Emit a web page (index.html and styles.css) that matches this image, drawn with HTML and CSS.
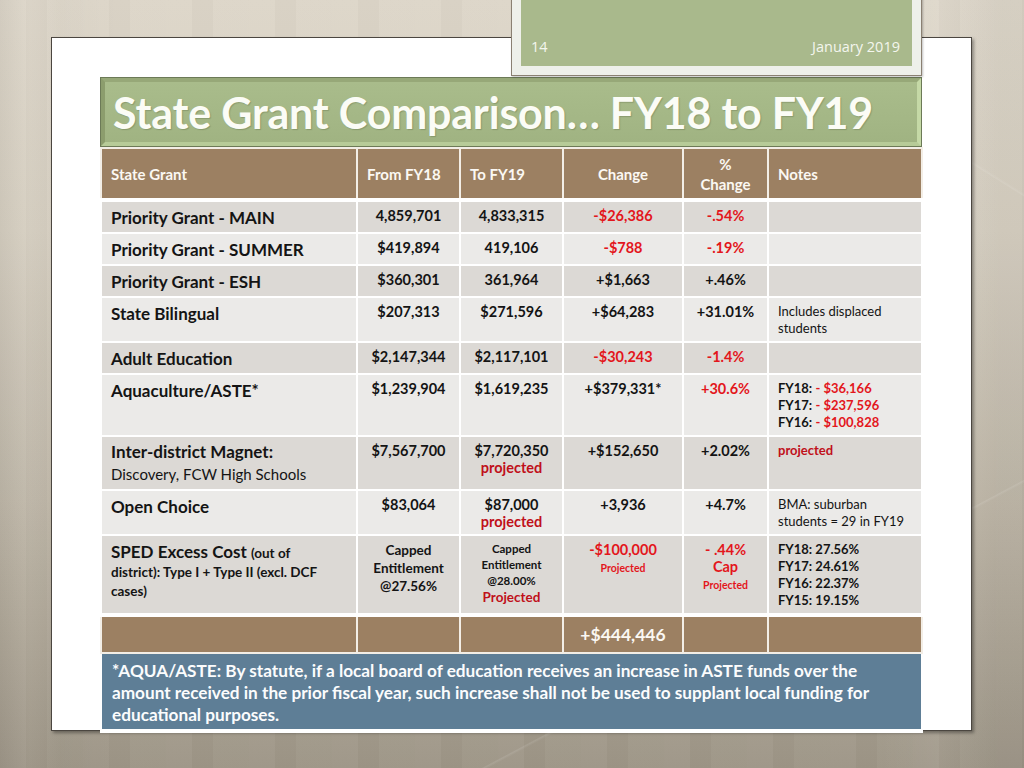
FILE: index.html
```html
<!DOCTYPE html>
<html lang="en">
<head>
<meta charset="utf-8">
<title>State Grant Comparison</title>
<link rel="stylesheet" href="styles.css">
</head>
<body>
<div class="datebox">
  <div class="datebox-inner">
    <span class="slide-num">14</span>
    <span class="slide-date">January 2019</span>
  </div>
</div>
<div class="panel">
  <div class="title-bar"><h1 class="title">State Grant Comparison… FY18 to FY19</h1></div>
  <table class="grid">
    <colgroup>
      <col class="c1"><col class="c2"><col class="c3"><col class="c4"><col class="c5"><col class="c6">
    </colgroup>
    <thead>
      <tr class="head">
        <th class="left">State Grant</th>
        <th class="left">From FY18</th>
        <th class="left">To FY19</th>
        <th>Change</th>
        <th>%<br>Change</th>
        <th class="left">Notes</th>
      </tr>
    </thead>
    <tbody>
      <tr class="dark">
        <td class="name">Priority Grant - MAIN</td>
        <td class="num">4,859,701</td>
        <td class="num">4,833,315</td>
        <td class="num red">-$26,386</td>
        <td class="num red">-.54%</td>
        <td class="note"></td>
      </tr>
      <tr class="light">
        <td class="name">Priority Grant - SUMMER</td>
        <td class="num">$419,894</td>
        <td class="num">419,106</td>
        <td class="num red">-$788</td>
        <td class="num red">-.19%</td>
        <td class="note"></td>
      </tr>
      <tr class="dark">
        <td class="name">Priority Grant - ESH</td>
        <td class="num">$360,301</td>
        <td class="num">361,964</td>
        <td class="num">+$1,663</td>
        <td class="num">+.46%</td>
        <td class="note"></td>
      </tr>
      <tr class="light">
        <td class="name">State Bilingual</td>
        <td class="num">$207,313</td>
        <td class="num">$271,596</td>
        <td class="num">+$64,283</td>
        <td class="num">+31.01%</td>
        <td class="note">Includes displaced students</td>
      </tr>
      <tr class="dark">
        <td class="name">Adult Education</td>
        <td class="num">$2,147,344</td>
        <td class="num">$2,117,101</td>
        <td class="num red">-$30,243</td>
        <td class="num red">-1.4%</td>
        <td class="note"></td>
      </tr>
      <tr class="light">
        <td class="name">Aquaculture/ASTE*</td>
        <td class="num">$1,239,904</td>
        <td class="num">$1,619,235</td>
        <td class="num">+$379,331*</td>
        <td class="num red">+30.6%</td>
        <td class="note strong">FY18: <span class="red">- $36,166</span><br>FY17: <span class="red">- $237,596</span><br>FY16: <span class="red">- $100,828</span></td>
      </tr>
      <tr class="dark">
        <td class="name tall">Inter-district Magnet:<br><span class="sub">Discovery, FCW High Schools</span></td>
        <td class="num">$7,567,700</td>
        <td class="num">$7,720,350<br><span class="proj">projected</span></td>
        <td class="num">+$152,650</td>
        <td class="num">+2.02%</td>
        <td class="note strong"><span class="proj">projected</span></td>
      </tr>
      <tr class="light">
        <td class="name">Open Choice</td>
        <td class="num">$83,064</td>
        <td class="num">$87,000<br><span class="proj">projected</span></td>
        <td class="num">+3,936</td>
        <td class="num">+4.7%</td>
        <td class="note">BMA: suburban students = 29 in FY19</td>
      </tr>
      <tr class="dark">
        <td class="name sped">SPED Excess Cost <span class="small">(out of<br>district): Type I + Type II (excl. DCF<br>cases)</span></td>
        <td class="num cap">Capped<br>Entitlement<br>@27.56%</td>
        <td class="num cap2">Capped<br>Entitlement<br>@28.00%<br><span class="proj big">Projected</span></td>
        <td class="num red">-$100,000<br><span class="tiny">Projected</span></td>
        <td class="num red">- .44%<br>Cap<br><span class="tiny">Projected</span></td>
        <td class="note strong">FY18: 27.56%<br>FY17: 24.61%<br>FY16: 22.37%<br>FY15: 19.15%</td>
      </tr>
      <tr class="total">
        <td></td><td></td><td></td>
        <td class="total-val">+$444,446</td>
        <td></td><td></td>
      </tr>
      <tr class="foot">
        <td colspan="6">*AQUA/ASTE: By statute, if a local board of education receives an increase in ASTE funds over the<br>amount received in the prior fiscal year, such increase shall not be used to supplant local funding for<br>educational purposes.</td>
      </tr>
    </tbody>
  </table>
</div>
</body>
</html>
```
FILE: styles.css
```css
html, body {
  margin: 0;
  padding: 0;
}
body {
  width: 1024px;
  height: 768px;
  overflow: hidden;
  position: relative;
  box-sizing: border-box;
  padding: 37px 0 0 51px;
  font-family: Lato, "Open Sans", sans-serif;
  background:
    linear-gradient(152deg, transparent 0 78%, rgba(255,255,255,0.10) 78.1%, transparent 78.3%),
    linear-gradient(32deg, transparent 0 86%, rgba(255,255,255,0.09) 86.1%, transparent 86.3%),
    linear-gradient(90deg, rgba(0,0,0,0.05) 0, rgba(255,255,255,0.04) 30px, rgba(0,0,0,0.02) 60px, transparent 120px, transparent 880px, rgba(255,255,255,0.05) 940px, rgba(0,0,0,0.04) 1000px),
    repeating-linear-gradient(90deg, rgba(255,255,255,0.025) 0 26px, rgba(0,0,0,0.02) 26px 47px, rgba(255,255,255,0.015) 47px 83px),
    linear-gradient(180deg, #ddd6c9 0%, #d6cfc1 30%, #bfb7a8 65%, #9e9687 100%);
}

.panel {
  background: #ffffff;
  border: 1px solid #4b4640;
  box-shadow: 2px 2px 3px rgba(0,0,0,0.35);
  box-sizing: content-box;
  padding: 40px 0 0 49px;
  width: 870px;
  height: 652px;
}

.datebox {
  position: absolute;
  left: 511px;
  top: -12px;
  width: 391px;
  height: 67px;
  background: #eef0ea;
  border: 1px solid #8a8072;
  padding: 10px 9px 9px 9px;
  box-shadow: 1px 1px 2px rgba(0,0,0,0.25);
  z-index: 2;
}
.datebox-inner {
  height: 100%;
  background: #a9b98c;
  display: flex;
  justify-content: space-between;
  align-items: flex-end;
  padding: 0 12px 10px 10px;
  box-sizing: border-box;
  color: #f4f6ee;
  font-family: "Open Sans", sans-serif;
  font-size: 14.5px;
  line-height: 18px;
}

.title-bar {
  width: 812px;
  height: 60px;
  border-style: solid;
  border-width: 4px;
  border-color: #97a878 #c5d9a6 #b7cb98 #8c9d6d;
  box-shadow: 0 0 0 1px #6c7a57;
  background: linear-gradient(180deg, #a9bc8b 0%, #a4b786 60%, #a0b382 100%);
  display: flex;
  align-items: center;
}
.title {
  margin: 0 0 0 8px;
  color: #fbfcf6;
  font-family: Lato, sans-serif;
  font-weight: 700;
  font-size: 43px;
  letter-spacing: -0.2px;
  line-height: 1;
  text-shadow: 1px 1px 1px rgba(60,70,40,0.25);
}

.grid {
  width: 821px;
  margin-left: -1px;
  margin-top: 1px;
  border-collapse: collapse;
  table-layout: fixed;
  color: #141414;
}
.c1 { width: 256px; }
.c2 { width: 103px; }
.c3 { width: 103px; }
.c4 { width: 120px; }
.c5 { width: 85px; }
.c6 { width: 154px; }

.grid th, .grid td {
  border: 2px solid #ffffff;
  padding: 5px 9px 4px 9px;
  vertical-align: top;
}

.head th {
  background: #9c8062;
  color: #fbf8f3;
  font-size: 15px;
  font-weight: 700;
  line-height: 20px;
  vertical-align: middle;
  height: 40px;
  text-align: center;
  border-color: #f3eee6;
  border-bottom-width: 4px;
  border-bottom-color: #ffffff;
}
.head th.left { text-align: left; }

.dark td { background: #dcd9d5; }
.light td { background: #ebeae8; }

.name {
  font-size: 17px;
  font-weight: 700;
  line-height: 21px;
}
.name.tall { line-height: 22px; padding-top: 4px; }
.sub { font-weight: 400; font-size: 15px; }
.name.sped { line-height: 18px; padding-top: 7px; }
.small { font-size: 13.5px; line-height: 18px; }

.num {
  text-align: center;
  font-size: 14.5px;
  font-weight: 700;
  line-height: 17px;
}
.num.cap { font-size: 13.5px; line-height: 18px; }
.num.cap2 { font-size: 11.5px; line-height: 16px; }
.big { font-size: 13.5px; }
.tiny { font-size: 10.5px; line-height: 16px; }
.red { color: #e3161c; }
.proj { color: #c0101a; }

.note {
  font-size: 13px;
  line-height: 17px;
  font-weight: 400;
}
.note.strong { font-weight: 700; }

.total td {
  background: #9c8062;
  height: 26px;
  border-top-width: 4px;
  border-color: #f3eee6;
  border-top-color: #ffffff;
}
.total td.total-val {
  color: #fbf8f3;
  font-size: 17.5px;
  font-weight: 700;
  text-align: center;
  vertical-align: middle;
  padding-top: 4px;
}

.foot td {
  background: #5e7e96;
  color: #fbfcfd;
  font-size: 17.2px;
  font-weight: 700;
  line-height: 22px;
  padding: 6px 10px 3px 10px;
  border-width: 0 2px 4px 2px;
}
```
